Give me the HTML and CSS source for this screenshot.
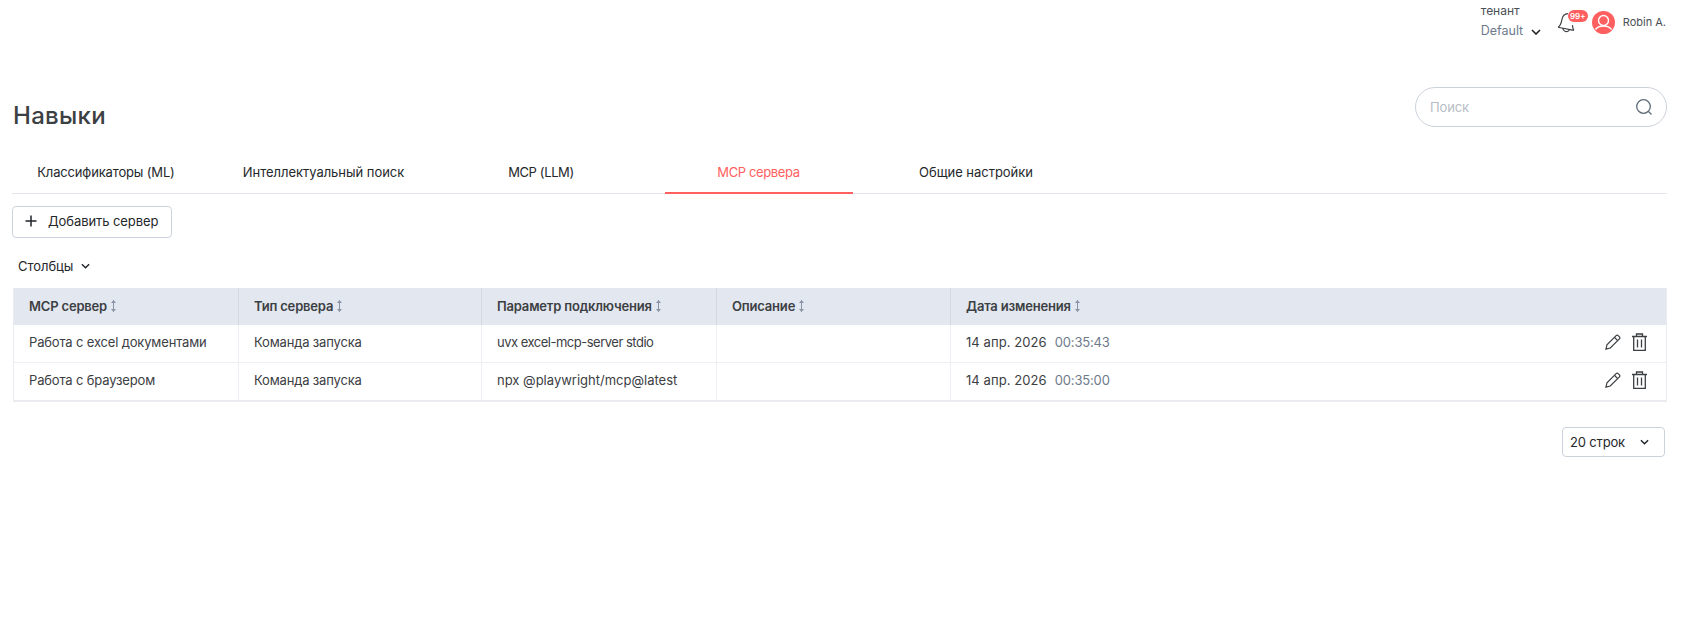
FILE: index.html
```html
<!DOCTYPE html>
<html lang="ru">
<head>
<meta charset="utf-8">
<title>Навыки</title>
<link rel="stylesheet" href="styles.css">
</head>
<body>
<header class="topbar">
  <div class="tenant">
    <div class="tenant-label">тенант</div>
    <div class="tenant-value">Default
      <svg class="chev" width="10" height="6" viewBox="0 0 10 6"><path d="M1 1l4 4 4-4" fill="none" stroke="#1f2328" stroke-width="1.6"/></svg>
    </div>
  </div>
  <div class="bell">
    <svg width="21" height="21" viewBox="0 0 20 20" fill="none" stroke="#3c4043" stroke-width="1.1"><path d="M1 14.500c2.500-1.500 3-3.500 3.500-6.500C5 4.500 7 1.500 10.500 1.500M1 14.500l15 3M5.500 15.500c.2 2 2.300 3.600 4.300 3.100 1.200-.3 1.800-1 2-1.900M16 17.500c-.8-1.500-1.200-3-1.300-5"/></svg>
    <span class="badge">99+</span>
  </div>
  <div class="avatar">
    <svg width="23" height="23" viewBox="0 0 23 23"><circle cx="11.500" cy="11.500" r="11.500" fill="#ff5f5f"/><circle cx="11.500" cy="9.500" r="5" fill="none" stroke="#fff" stroke-width="1.400"/><path d="M3.500 18.500c2-3 5-3.500 8-3.500s6 .5 8 3.500" fill="none" stroke="#fff" stroke-width="1.400"/></svg>
  </div>
  <div class="user">Robin A.</div>
</header>

<main class="page">
  <div class="title-row">
    <h1 class="title">Навыки</h1>
    <label class="search">
      <span class="search-text">Поиск</span>
      <svg width="18" height="18" viewBox="0 0 18 18" fill="none" stroke="#5f6b7a" stroke-width="1.300"><circle cx="8.500" cy="8.500" r="6.800"/><path d="M13.500 13.500l3 3"/></svg>
    </label>
  </div>

  <nav class="tabs">
    <a class="tab cls">Классификаторы (ML)</a>
    <a class="tab">Интеллектуальный поиск</a>
    <a class="tab latin">MCP (LLM)</a>
    <a class="tab latin active">MCP сервера</a>
    <a class="tab">Общие настройки</a>
  </nav>

  <button class="add-btn">
    <svg width="12" height="12" viewBox="0 0 12 12"><path d="M6 .5v11M.5 6h11" stroke="#1f2328" stroke-width="1.500"/></svg>
    <span>Добавить сервер</span>
  </button>

  <div class="columns">Столбцы
    <svg width="9" height="6" viewBox="0 0 10 6"><path d="M1 1l4 4 4-4" fill="none" stroke="#1f2328" stroke-width="1.500"/></svg>
  </div>

  <div class="table">
    <div class="row head">
      <div class="cell">MCP сервер <svg class="sort" width="7" height="14" viewBox="0 0 7 14"><path d="M3.500 1.500v11" stroke="#8a94a6" stroke-width="1"/><path d="M1 4l2.500-3L6 4zM1 10l2.500 3L6 10z" fill="#8a94a6"/></svg></div>
      <div class="cell">Тип сервера <svg class="sort" width="7" height="14" viewBox="0 0 7 14"><path d="M3.500 1.500v11" stroke="#8a94a6" stroke-width="1"/><path d="M1 4l2.500-3L6 4zM1 10l2.500 3L6 10z" fill="#8a94a6"/></svg></div>
      <div class="cell">Параметр подключения <svg class="sort" width="7" height="14" viewBox="0 0 7 14"><path d="M3.500 1.500v11" stroke="#8a94a6" stroke-width="1"/><path d="M1 4l2.500-3L6 4zM1 10l2.500 3L6 10z" fill="#8a94a6"/></svg></div>
      <div class="cell">Описание <svg class="sort" width="7" height="14" viewBox="0 0 7 14"><path d="M3.500 1.500v11" stroke="#8a94a6" stroke-width="1"/><path d="M1 4l2.500-3L6 4zM1 10l2.500 3L6 10z" fill="#8a94a6"/></svg></div>
      <div class="cell last">Дата изменения <svg class="sort" width="7" height="14" viewBox="0 0 7 14"><path d="M3.500 1.500v11" stroke="#8a94a6" stroke-width="1"/><path d="M1 4l2.500-3L6 4zM1 10l2.500 3L6 10z" fill="#8a94a6"/></svg></div>
    </div>
    <div class="row">
      <div class="cell">Работа с excel документами</div>
      <div class="cell">Команда запуска</div>
      <div class="cell"><span class="tight">uvx excel-mcp-server stdio</span></div>
      <div class="cell"></div>
      <div class="cell last"><span class="date">14 апр. 2026</span><span class="time">00:35:43</span>
        <div class="actions">
          <svg width="16" height="16" viewBox="0 0 17 17" fill="none" stroke="#3c4043" stroke-width="1.300"><path d="M1 16l1.100-4.600L11.800 1.700a1.600 1.600 0 0 1 2.200 0l1.300 1.300a1.600 1.600 0 0 1 0 2.200L5.600 14.900z"/><path d="M10 3.500l3.500 3.500"/></svg>
          <svg width="15" height="18" viewBox="0 0 15 18" fill="none" stroke="#3c4043" stroke-width="1.300"><path d="M0 3.500h15M4.500 3.500V1h6v2.500M1.700 3.500v13.800h11.600V3.500M5.500 6.500v8M9.500 6.500v8"/></svg>
        </div>
      </div>
    </div>
    <div class="row">
      <div class="cell">Работа с браузером</div>
      <div class="cell">Команда запуска</div>
      <div class="cell"><span class="wide">npx @playwright/mcp@latest</span></div>
      <div class="cell"></div>
      <div class="cell last"><span class="date">14 апр. 2026</span><span class="time">00:35:00</span>
        <div class="actions">
          <svg width="16" height="16" viewBox="0 0 17 17" fill="none" stroke="#3c4043" stroke-width="1.300"><path d="M1 16l1.100-4.600L11.800 1.700a1.600 1.600 0 0 1 2.200 0l1.300 1.300a1.600 1.600 0 0 1 0 2.200L5.600 14.900z"/><path d="M10 3.500l3.500 3.500"/></svg>
          <svg width="15" height="18" viewBox="0 0 15 18" fill="none" stroke="#3c4043" stroke-width="1.300"><path d="M0 3.500h15M4.500 3.500V1h6v2.500M1.700 3.500v13.800h11.600V3.500M5.500 6.500v8M9.500 6.500v8"/></svg>
        </div>
      </div>
    </div>
  </div>

  <div class="pager">
    <div class="select">20 строк
      <svg width="9" height="6" viewBox="0 0 10 6"><path d="M1 1l4 4 4-4" fill="none" stroke="#1f2328" stroke-width="1.600"/></svg>
    </div>
  </div>
</main>
</body>
</html>
```
FILE: styles.css
```css
* { box-sizing: border-box; }
html, body { margin: 0; padding: 0; background: #fff; }
body { font-family: Inter, "Noto Sans", sans-serif; font-size: 13px; letter-spacing: -.16px; color: #3c4043; height: 630px; overflow: hidden; }

.topbar { display: flex; align-items: center; justify-content: flex-end; height: 44px; padding-right: 17px; }
.tenant { width: 70px; margin-right: 6px; margin-top: -2px; font-size: 12px; line-height: 20px; letter-spacing: 0; }
.tenant-label { color: #4a4f55; }
.tenant-value { color: #6e7a8c; display: flex; align-items: center; gap: 8px; font-size: 12.500px; }
.chev { margin-top: 2px; }
.bell { position: relative; width: 35px; height: 24px; padding-top: 2px; }
.bell svg { display: block; }
.badge { position: absolute; left: 11px; top: 0; width: 20px; height: 12px; border-radius: 6px; background: #ff5f5f; color: #fff; font-size: 8px; font-weight: 600; letter-spacing: 0; line-height: 12px; text-align: center; }
.avatar { width: 23px; height: 23px; margin-right: 8px; }
.avatar svg { display: block; }
.user { font-size: 11px; letter-spacing: 0; color: #4a4f55; }

.page { padding: 0 16px 0 12px; }
.title-row { display: flex; justify-content: space-between; align-items: flex-start; height: 84px; }
.title { margin: 60px 0 0 1px; font-size: 24px; font-weight: 500; line-height: 24px; color: #3c4043; letter-spacing: .3px; }
.search { display: flex; align-items: center; justify-content: space-between; width: 252px; height: 40px; margin-top: 43px; border: 1px solid #ccd2dd; border-radius: 20px; padding: 0 13px 0 14px; background: #fff; }
.search-text { color: #b7bcc5; font-size: 13px; }

.tabs { display: flex; gap: 29.500px; height: 66px; border-bottom: 1px solid #e3e6ef; }
.tab { width: 188px; height: 66px; display: flex; align-items: center; justify-content: center; color: #25282b; font-size: 13px; letter-spacing: -.03px; padding-top: 23px; border-bottom: 2px solid transparent; }
.tab.cls { letter-spacing: -.16px; }
.tab.latin { letter-spacing: -.38px; }
.tab.active { color: #ff5f5f; border-bottom-color: #ff5f5f; }

.add-btn { display: flex; align-items: center; gap: 11px; margin-top: 12px; width: 160px; height: 32px; padding: 0 12px 2px; background: #fff; border: 1px solid #ccd2dd; border-radius: 4px; font: inherit; letter-spacing: -.08px; color: #25282b; white-space: nowrap; }

.columns { display: flex; align-items: center; gap: 8px; margin: 20px 0 0 6px; height: 16px; color: #25282b; letter-spacing: -.05px; }

.table { margin: 14px 0 0 1px; border: 1px solid #e9ebf1; border-top: 0; border-bottom-width: 2px; width: 1654px; }
.row { display: grid; grid-template-columns: 225px 243px 235px 234px 1fr; height: 37.500px; border-bottom: 1px solid #edeff4; }
.row:last-child { border-bottom: 0; }
.row.head { background: #e3e7f0; font-weight: 600; color: #3c4043; height: 37px; border-bottom: 0; letter-spacing: -.18px; }
.cell { display: flex; align-items: center; gap: 4px; padding: 0 0 2px 15px; border-right: 1px solid #edeff4; color: #3c4043; }
.head .cell { border-right-color: #d3d8e3; gap: 3px; }
.cell.last { border-right: 0; }
.tight { letter-spacing: -.5px; }
.wide { letter-spacing: 0; }
.date { letter-spacing: .08px; }
.time { color: #6e7a8c; margin-left: 4px; }
.actions { display: flex; align-items: center; gap: 11px; margin-left: auto; padding-right: 19px; }

.pager { display: flex; justify-content: flex-end; margin-top: 25px; padding-right: 2px; }
.select { display: flex; align-items: center; justify-content: space-between; width: 103px; height: 30px; padding: 0 15px 0 7px; border: 1px solid #ccd2dd; border-radius: 4px; color: #25282b; }
```
